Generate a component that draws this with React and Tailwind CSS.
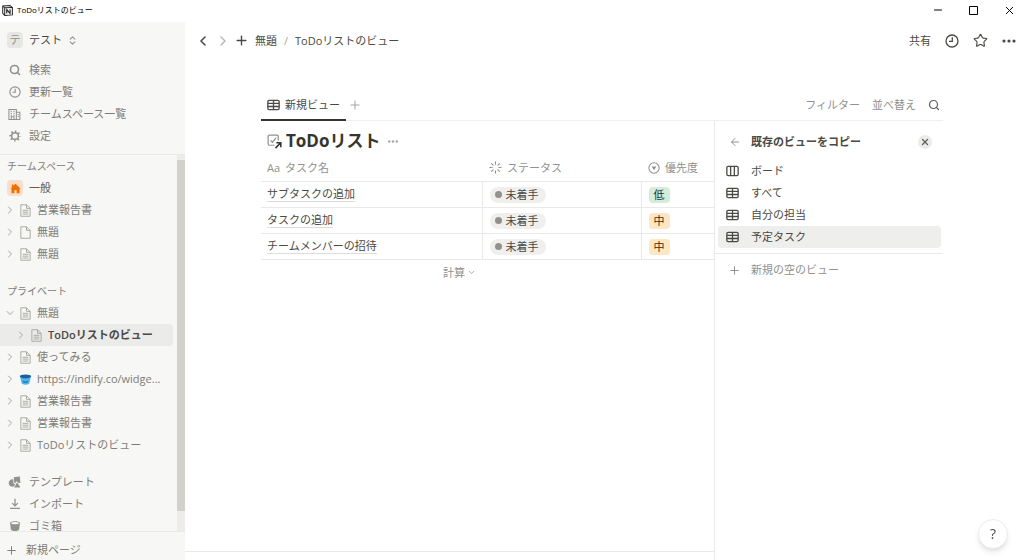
import { ArrowLeft, ChevronDown, ChevronLeft, ChevronRight, ChevronsUpDown, Minus, Plus, Search, Star, X } from "lucide-react";

const ClockIcon = ({className}) => (
    <svg viewBox="0 0 14 14" className={className} fill="none" stroke="currentColor" strokeWidth="1.3">
        <circle cx="7" cy="7" r="6" />
        <path d="M7.3 3.2V7.3H4" />
    </svg>
)

const BuildingIcon = ({className}) => (
    <svg viewBox="0 0 14 14" className={className} fill="none" stroke="currentColor" strokeWidth="1.1">
        <path d="M1 12.5V1.5H9V12.5M9 4.5H12.8V12.5H.4M3.5 12.5V9.5H6.5V12.5" />
        <path d="M3.5 3V8.5M6.5 3V8.5M11 6.5V10.5" strokeDasharray="1.2 1" />
    </svg>
)

const GearIcon = ({className}) => (
    <svg viewBox="0 0 14 14" className={className} fill="none" stroke="currentColor">
        <circle cx="7" cy="7" r="3.9" strokeWidth="1.7" />
        <circle cx="7" cy="7" r="5.6" strokeWidth="1.9" strokeDasharray="1.8 2.6" strokeDashoffset="0.9" />
    </svg>
)

const PageIcon = ({className, empty}) => (
    <svg viewBox="0 0 13 14" className={className} fill="none" stroke="currentColor">
        <path d="M1.5 .8H7.6L11.5 4.7V13.2H1.5ZM7.6 .8V4.7H11.5" />
        {!empty && <path d="M3.4 6.8H9.6M3.4 8.8H9.6M3.4 10.8H9.6" />}
    </svg>
)

const BucketIcon = ({className}) => (
    <svg viewBox="0 0 14 14" className={className}>
        <path d="M1 3.2 3 11.5Q7 13.6 11 11.5L13 3.2Z" fill="#4fb4ee" />
        <ellipse cx="7" cy="3.6" rx="6.1" ry="2" fill="#1c5f9c" />
        <path d="M4.4 9.2Q7 10.8 9.6 9.2" fill="none" stroke="#1c5f9c" strokeWidth="1.2" />
    </svg>
)

const TemplateIcon = ({className}) => (
    <svg viewBox="0 0 14 14" className={className} fill="currentColor">
        <path d="M6.2 1.8 12.8 1.2 13.3 8 10.6 7.8 9.6 6 7.8 8.4 6.7 7.6Z" />
        <path d="M5.8 4.2A4 4 0 1 0 6.6 11.6L7.6 9.4 5.8 8.4Z" />
        <path d="M9.8 7.2 13.4 13H6.6Z" />
    </svg>
)

const ImportIcon = ({className}) => (
    <svg viewBox="0 0 14 14" className={className} fill="none" stroke="currentColor" strokeWidth="1.5">
        <path d="M7 1V9M3.8 6 7 9.2 10.2 6M1.2 12.2H12.8" />
    </svg>
)

const TrashIcon = ({className}) => (
    <svg viewBox="0 0 14 14" className={className}>
        <path d="M1.2 3.5C1.2.8 12.8.8 12.8 3.5L11.8 10.8Q11.4 13 7 13T2.2 10.8Z" fill="currentColor" />
        <ellipse cx="7" cy="3.7" rx="4.5" ry="1.3" fill="#f7f7f5" />
    </svg>
)

const TableIcon = ({className}) => (
    <svg viewBox="0 0 14 12" className={className} fill="none" stroke="currentColor" strokeWidth="1.4">
        <rect x=".9" y="1" width="12.2" height="10" rx="1.4" />
        <path d="M1 4.3H13M1 7.6H13M7 1V11" />
    </svg>
)

const BoardIcon = ({className}) => (
    <svg viewBox="0 0 14 12" className={className} fill="none" stroke="currentColor" strokeWidth="1.4">
        <rect x=".9" y="1" width="12.2" height="10" rx="1.4" />
        <path d="M5 1V11M9 1V11" />
    </svg>
)

const LinkedCheckIcon = ({className}) => (
    <svg viewBox="0 0 16 16" className={className} fill="none" stroke="#91918e" strokeWidth="1.3">
        <path d="M12 7V2.5Q12 1.2 10.7 1.2H2.5Q1.2 1.2 1.2 2.5V10.7Q1.2 12 2.5 12H8" />
        <path d="M3.8 6.8 5.8 8.8 9.6 4.2" />
        <path d="M9 15 14.4 9.6M10 9.3H14.7V14" stroke="#37352f" strokeWidth="1.7" />
    </svg>
)

const StatusIcon = ({className}) => (
    <svg viewBox="0 0 14 14" className={className} fill="none" stroke="currentColor" strokeWidth="1.2" strokeLinecap="round">
        <path d="M7 1V3.4M7 10.6V13M1 7H3.4M10.6 7H13M2.8 2.8 4.4 4.4M9.6 9.6 11.2 11.2M2.8 11.2 4.4 9.6M9.6 4.4 11.2 2.8" />
    </svg>
)

const SelectIcon = ({className}) => (
    <svg viewBox="0 0 14 14" className={className} fill="none" stroke="currentColor" strokeWidth="1.2">
        <circle cx="7" cy="7" r="6" />
        <path d="M4.2 5.2H9.8L7 9.6Z" fill="currentColor" stroke="none" />
    </svg>
)

const DotsIcon = ({className}) => (
    <svg viewBox="0 0 14 4" className={className} fill="currentColor">
        <circle cx="2" cy="2" r="1.6" />
        <circle cx="7" cy="2" r="1.6" />
        <circle cx="12" cy="2" r="1.6" />
    </svg>
)

const MaximizeIcon = ({className}) => (
    <svg viewBox="0 0 9 9" className={className} fill="none" stroke="currentColor">
        <path d="M.5 .5H8.5V8.5H.5Z" />
    </svg>
)

const NotionIcon = ({className}) => (
    <svg viewBox="0 0 12 12" className={className}>
        <path d="M.8 1.2 8.6.6 11.3 2.6V10.8L3 11.4.8 9Z" fill="#fff" stroke="#222" strokeWidth="1.1" />
        <path d="M.8 1.2 3 3.1 11.3 2.6M3 3.1V11.4" stroke="#222" strokeWidth="1.1" fill="none" />
        <path d="M5.2 9.4V5L8.8 9.2V4.7" stroke="#222" strokeWidth="1.2" fill="none" />
    </svg>
)

const HomeIcon = ({className}) => (
    <svg viewBox="0 0 12 12" className={className} fill="#f07000">
        <path d="M6 .8 11.6 6.2H10.4V11.2H7.2V7.8H4.8V11.2H1.6V6.2H.4L2 4.6V1.6H3.6V3.1Z" />
    </svg>
)

const menuItems = [
    { label: "検索", icon: <Search className="size-3" strokeWidth={3.2} /> },
    { label: "更新一覧", icon: <ClockIcon className="size-3" /> },
    { label: "チームスペース一覧", icon: <BuildingIcon className="size-[13px]" /> },
    { label: "設定", icon: <GearIcon className="size-3" /> },
]

const teamPages = [
    { label: "営業報告書" },
    { label: "無題", empty: true },
    { label: "無題" },
]

const privatePages = [
    { label: "無題", open: true },
    { label: "ToDoリストのビュー", active: true },
    { label: "使ってみる" },
    { label: "https://indify.co/widge...", bucket: true },
    { label: "営業報告書" },
    { label: "営業報告書" },
    { label: "ToDoリストのビュー" },
]

const toolItems = [
    { label: "テンプレート", icon: <TemplateIcon className="size-[14px]" /> },
    { label: "インポート", icon: <ImportIcon className="size-3" /> },
    { label: "ゴミ箱", icon: <TrashIcon className="size-3" /> },
]

const tasks = [
    { name: "サブタスクの追加", status: "未着手", priority: "低" },
    { name: "タスクの追加", status: "未着手", priority: "中" },
    { name: "チームメンバーの招待", status: "未着手", priority: "中" },
]

const views = [
    { label: "ボード", board: true },
    { label: "すべて" },
    { label: "自分の担当" },
    { label: "予定タスク", active: true },
]

const MenuRow = ({item}) => (
    <button type="button" className="flex h-[22px] w-full items-center gap-2 pl-2 text-left">
        <span className="flex w-[13px] justify-center text-[#91918e]">{item.icon}</span>
        <span>{item.label}</span>
    </button>
)

const PageRow = ({page}) => (
    <a
        href="#"
        className={page.active
            ? "mr-1 flex h-[22px] items-center rounded-r-sm bg-[#ebebea] pl-[15px] font-semibold text-[#4a4944]"
            : "mr-1 flex h-[22px] items-center pl-1"}
    >
        {page.open
            ? <ChevronDown className="size-3 shrink-0 text-[#a5a5a1]" />
            : <ChevronRight className="size-3 shrink-0 text-[#a5a5a1]" />}
        <span className="ml-[3px] mr-[5px] shrink-0 text-[#a5a5a1]">
            {page.bucket
                ? <BucketIcon className="size-[13px]" />
                : <PageIcon empty={page.empty} className="size-[13px]" />}
        </span>
        <span className="whitespace-nowrap">{page.label}</span>
    </a>
)

const Sidebar = () => (
    <aside className="flex w-[185px] shrink-0 flex-col bg-[#f7f7f5] text-[#7d7c78]">
        <button type="button" className="flex h-9 shrink-0 items-center gap-[6px] pl-[7px] text-[#4a4944]">
            <span className="flex size-4 items-center justify-center rounded-sm bg-[#e6e6e3] text-[#91918e]">テ</span>
            <span>テスト</span>
            <ChevronsUpDown className="-ml-px size-[11px] text-[#91918e]" strokeWidth={2.4} />
        </button>
        <nav className="border-b border-[#e9e9e7] pb-[7px] pt-px">
            {menuItems.map((item) => <MenuRow key={item.label} item={item} />)}
        </nav>
        <div className="flex min-h-0 flex-1">
            <div className="min-w-0 flex-1 overflow-hidden">
                <div className="pl-[7px] pt-[3px] text-[10px] leading-4">チームスペース</div>
                <a href="#" className="mt-[3px] flex h-[22px] items-center gap-[6px] pl-[7px] text-[#5f5e5a]">
                    <span className="flex size-4 items-center justify-center rounded-sm bg-[#fadec9]">
                        <HomeIcon className="size-[11px]" />
                    </span>
                    <span>一般</span>
                </a>
                {teamPages.map((page, index) => <PageRow key={index} page={page} />)}
                <div className="mt-[18px] pl-[7px] text-[10px] leading-4">プライベート</div>
                <div className="mt-[3px]">
                    {privatePages.map((page, index) => <PageRow key={index} page={page} />)}
                </div>
                <div className="mt-[15px]">
                    {toolItems.map((item) => <MenuRow key={item.label} item={item} />)}
                </div>
            </div>
            <div className="w-2 bg-[#edece9] pb-5 pt-[5px]">
                <div className="h-full bg-[#d3d1cb]"></div>
            </div>
        </div>
        <button type="button" className="flex h-[29px] shrink-0 items-center gap-2 border-t border-[#e9e9e7] pl-[5px] pt-2">
            <Plus className="size-[13px]" strokeWidth={1.8} />
            <span>新規ページ</span>
        </button>
    </aside>
)

const TaskTable = () => (
    <table className="w-full table-fixed border-collapse text-left">
        <thead>
            <tr className="h-[26px] border-b border-[#e9e9e7] text-[#91918e]">
                <th className="w-[221px] p-0 pl-[6px] font-normal">
                    <span className="flex items-center gap-[5px]"><span>Aa</span>タスク名</span>
                </th>
                <th className="w-[159px] p-0 pl-[7px] font-normal">
                    <span className="flex items-center gap-[5px]"><StatusIcon className="size-[13px]" />ステータス</span>
                </th>
                <th className="p-0 pl-[7px] font-normal">
                    <span className="flex items-center gap-[5px]"><SelectIcon className="size-3" />優先度</span>
                </th>
            </tr>
        </thead>
        <tbody>
            {tasks.map((task) => (
                <tr key={task.name} className="h-[26px] border-b border-[#e9e9e7]">
                    <td className="border-r border-[#e9e9e7] p-0 pl-[6px]">
                        <a href="#" className="inline-block border-b border-[#dcdcda] leading-[14px]">{task.name}</a>
                    </td>
                    <td className="border-r border-[#e9e9e7] p-0 pl-[7px] pt-px">
                        <span className="flex h-4 w-14 items-center gap-1 rounded-full bg-[#f0efed] pl-[5px]">
                            <span className="size-[7px] rounded-full bg-[#91918e]"></span>
                            {task.status}
                        </span>
                    </td>
                    <td className="p-0 pl-[7px] pt-px">
                        <span className={task.priority === "低"
                            ? "flex h-4 w-[21px] items-center justify-center rounded-sm bg-[#d5ecdc] text-[#1c3829]"
                            : "flex h-4 w-[21px] items-center justify-center rounded-sm bg-[#fde6c3] text-[#49290e]"}
                        >
                            {task.priority}
                        </span>
                    </td>
                </tr>
            ))}
        </tbody>
    </table>
)

const ViewPanel = () => (
    <section className="w-[229px] shrink-0 border-l border-[#e9e9e7]">
        <div className="flex h-[39px] items-center pb-px pl-[14px] pr-[11px] pt-[3px]">
            <button type="button" aria-label="戻る" className="text-[#91918e]"><ArrowLeft className="size-3" /></button>
            <h2 className="ml-[10px] flex-1 font-semibold">既存のビューをコピー</h2>
            <button type="button" aria-label="閉じる" className="flex size-[14px] items-center justify-center rounded-full bg-[#ebebea] text-[#5f5e5a]">
                <X className="size-[10px]" strokeWidth={3} />
            </button>
        </div>
        <div className="border-b border-[#e9e9e7] pb-[5px] pl-[3px] pr-[2px]">
            {views.map((view) => (
                <button
                    key={view.label}
                    type="button"
                    className={view.active
                        ? "flex h-[22px] w-full items-center gap-3 rounded-sm bg-[#eeeeec] pl-2"
                        : "flex h-[22px] w-full items-center gap-3 pl-2"}
                >
                    {view.board ? <BoardIcon className="h-3 w-[13px]" /> : <TableIcon className="h-3 w-[13px]" />}
                    {view.label}
                </button>
            ))}
        </div>
        <button type="button" className="mt-[5px] flex h-[22px] items-center gap-[10px] pl-[13px] text-[#91918e]">
            <Plus className="size-[13px]" strokeWidth={1.8} />
            新規の空のビュー
        </button>
    </section>
)

const App = () => {
    return (
        <div className="flex h-screen flex-col overflow-hidden bg-white font-['Open_Sans','Noto_Sans_CJK_JP',sans-serif] text-[11px] leading-4 text-[#4a4944]">
            <div className="flex h-[22px] shrink-0 items-center pb-[2px] text-black">
                <NotionIcon className="ml-[2px] size-[11px]" />
                <span className="ml-1 flex-1 text-[8px]">ToDoリストのビュー</span>
                <div className="flex items-center gap-6 pr-2">
                    <button type="button" aria-label="最小化"><Minus className="size-3" /></button>
                    <button type="button" aria-label="最大化"><MaximizeIcon className="mx-px size-[9px]" /></button>
                    <button type="button" aria-label="閉じる"><X className="size-[13px]" strokeWidth={1.8} /></button>
                </div>
            </div>
            <div className="flex min-h-0 flex-1">
                <Sidebar />
                <main className="flex min-w-0 flex-1 flex-col">
                    <header className="flex h-9 shrink-0 items-center pl-[10px] pr-2 pt-px">
                        <button type="button" aria-label="戻る"><ChevronLeft className="size-4" strokeWidth={2.4} /></button>
                        <button type="button" aria-label="進む" className="ml-1 text-[#b5b5b1]"><ChevronRight className="size-4" strokeWidth={2} /></button>
                        <button type="button" aria-label="追加" className="ml-[3px]"><Plus className="size-[15px]" strokeWidth={2.2} /></button>
                        <a href="#" className="ml-[6px]">無題</a>
                        <span className="mx-[7px] text-[#a5a5a1]">/</span>
                        <a href="#" className="flex-1">ToDoリストのビュー</a>
                        <div className="flex items-center gap-[14px]">
                            <button type="button">共有</button>
                            <button type="button" aria-label="履歴"><ClockIcon className="size-[14px]" /></button>
                            <button type="button" aria-label="お気に入り"><Star className="size-[15px]" strokeWidth={1.8} /></button>
                            <button type="button" aria-label="その他"><DotsIcon className="h-1 w-[14px]" /></button>
                        </div>
                    </header>
                    <div className="flex min-h-0 flex-1 flex-col pt-8">
                        <div className="ml-[76px] mr-[81px] flex h-[31px] shrink-0 items-stretch border-b border-[#efefee]">
                            <button type="button" className="-mb-px flex items-center gap-[5px] border-b-2 border-[#37352f] px-[6px]">
                                <TableIcon className="h-3 w-[13px]" />
                                新規ビュー
                            </button>
                            <button type="button" aria-label="ビューを追加" className="ml-[2px] text-[#a5a5a1]"><Plus className="size-[14px]" strokeWidth={1.8} /></button>
                            <div className="ml-auto flex items-center gap-3 pr-[3px] text-[#91918e]">
                                <button type="button">フィルター</button>
                                <button type="button">並べ替え</button>
                                <button type="button" aria-label="検索"><Search className="size-3 text-[#5f5e5a]" strokeWidth={2.4} /></button>
                            </div>
                        </div>
                        <div className="mr-[81px] flex flex-1">
                            <div className="flex min-w-0 flex-1 flex-col">
                                <div className="flex-1 pl-[76px]">
                                    <div className="flex h-[34px] items-center pl-[6px] pt-[6px]">
                                        <LinkedCheckIcon className="size-[15px]" />
                                        <h1 className="ml-1 text-[17px] font-bold leading-6 text-[#37352f]">ToDoリスト</h1>
                                        <button type="button" aria-label="その他" className="ml-[7px] text-[#a5a5a1]"><DotsIcon className="h-[3px] w-3" /></button>
                                    </div>
                                    <TaskTable />
                                    <button type="button" className="ml-[182px] mt-[5px] flex items-center gap-[2px] text-[#91918e]">
                                        計算
                                        <ChevronDown className="size-[9px]" />
                                    </button>
                                </div>
                                <div className="h-[9px] border-t border-[#e9e9e7]"></div>
                            </div>
                            <ViewPanel />
                        </div>
                    </div>
                </main>
            </div>
            <button type="button" aria-label="ヘルプ" className="fixed bottom-[11px] right-4 size-[30px] rounded-full border border-[#ebebea] bg-white text-[14px] shadow-md">?</button>
        </div>
    )
}

export default App;
